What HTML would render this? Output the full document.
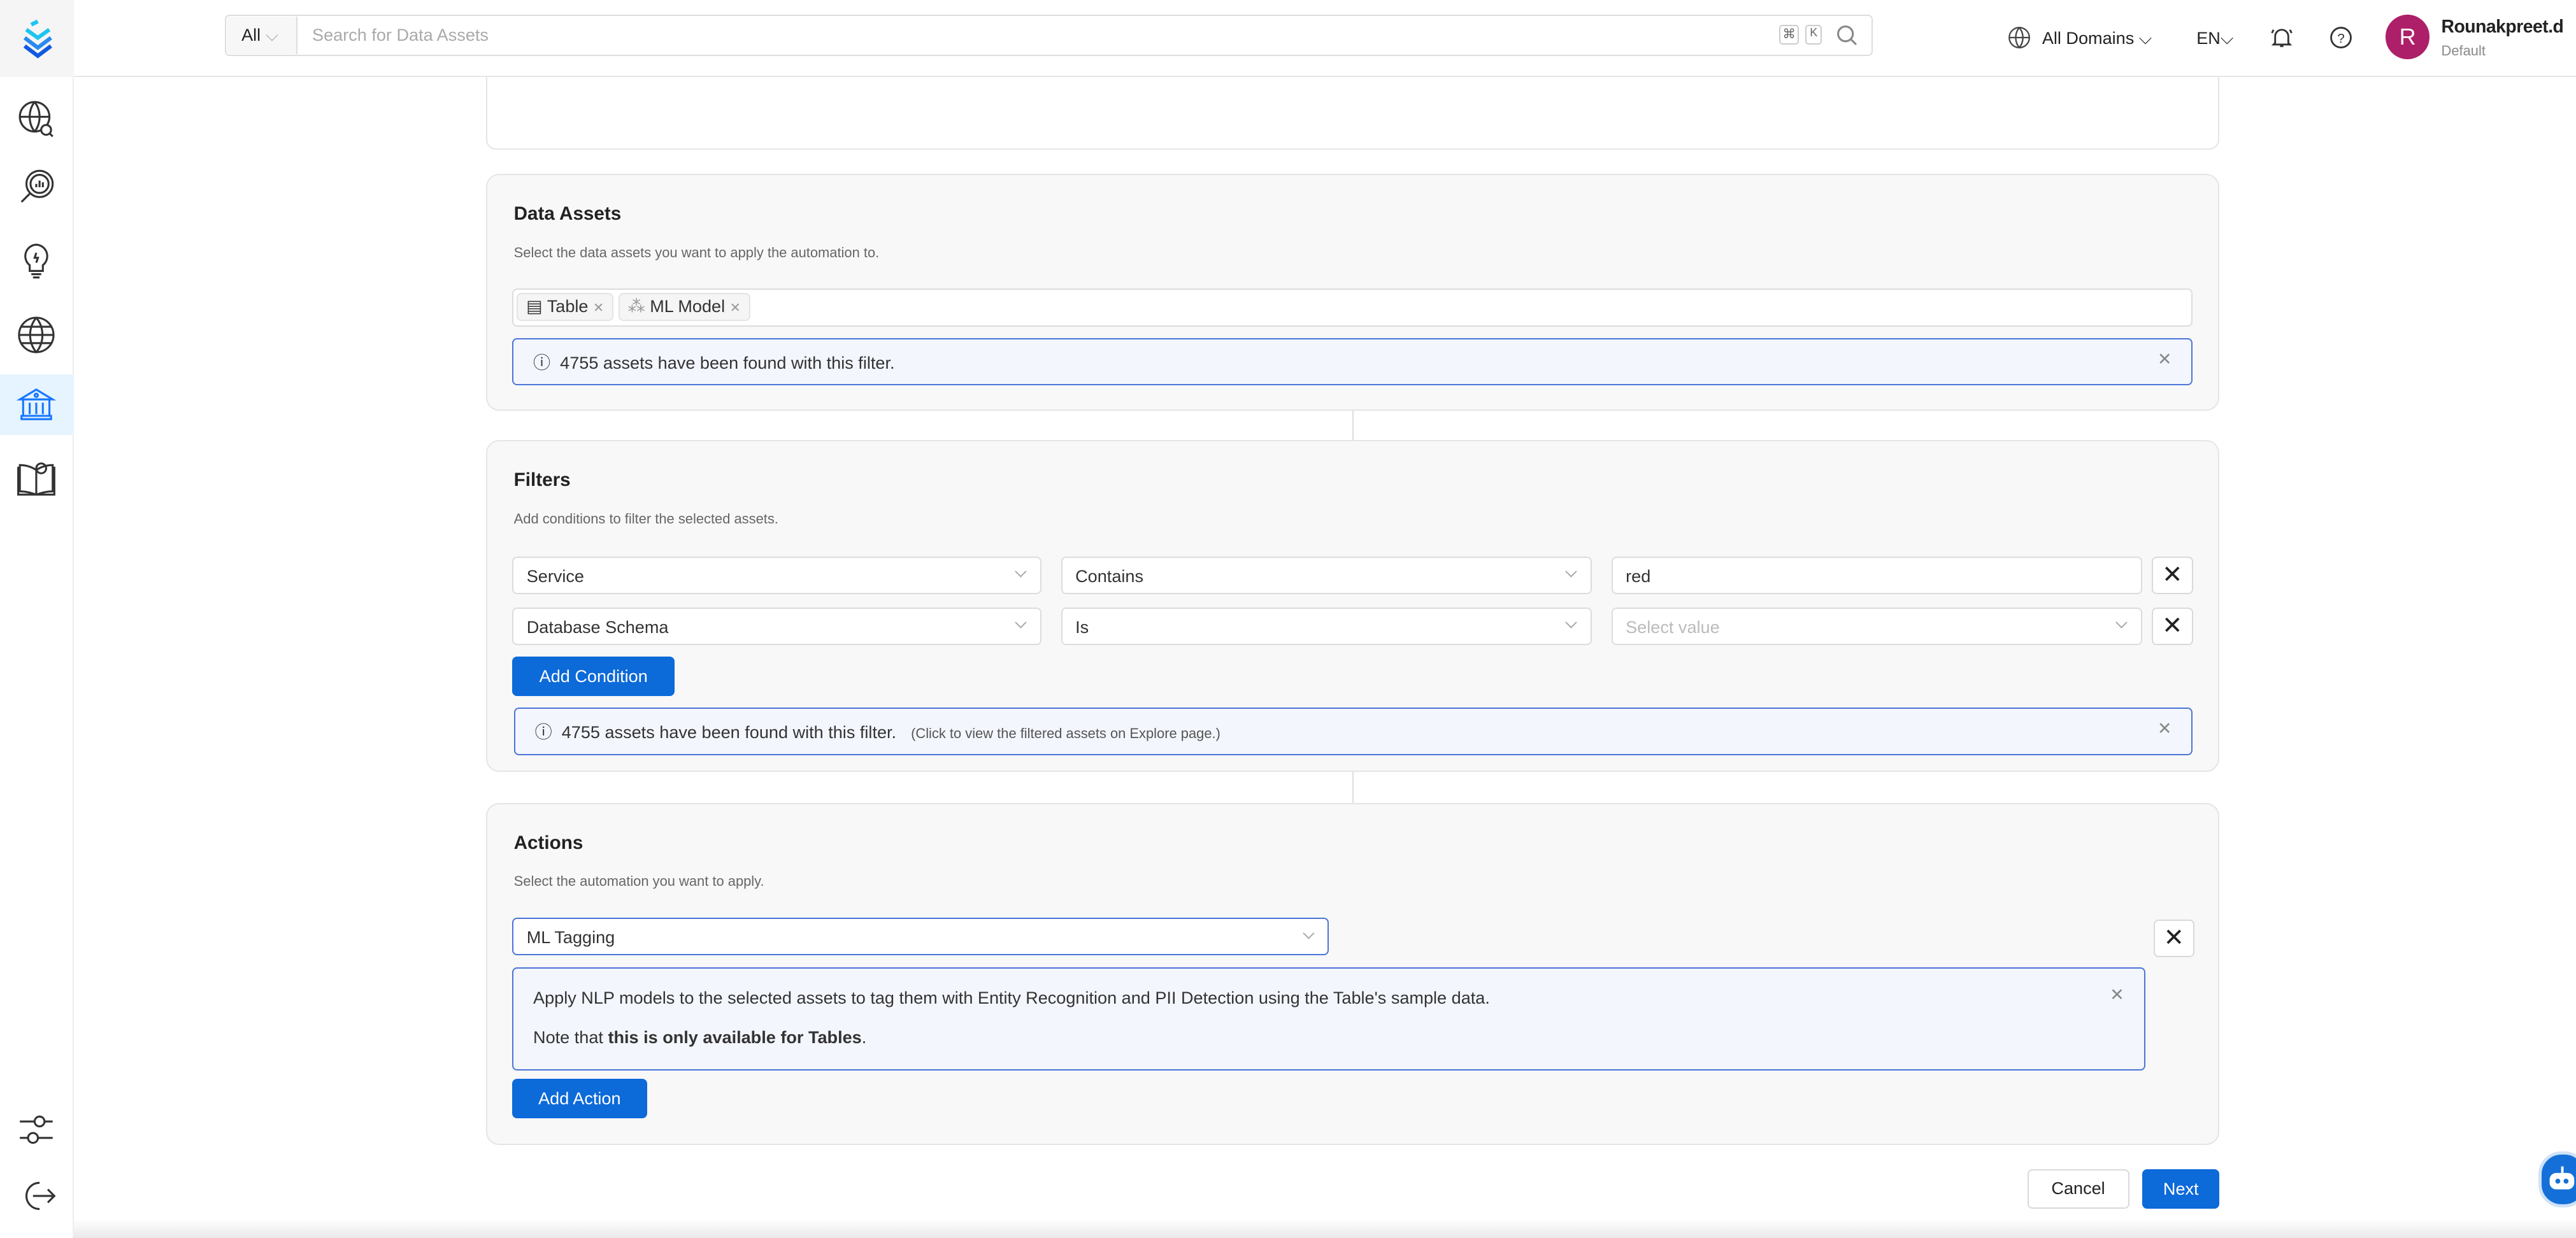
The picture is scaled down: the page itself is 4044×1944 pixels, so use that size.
<!DOCTYPE html>
<html><head><meta charset="utf-8"><style>
*{box-sizing:border-box;margin:0;padding:0}
html,body{width:4044px;height:1944px;overflow:hidden;background:#fff}
#r{zoom:2.5791;width:1568px;height:754px;position:relative;font-family:"Liberation Sans",sans-serif;color:#222;font-size:12px}
.a{position:absolute}
.side{left:0;top:0;width:45px;height:754px;background:#fff;border-right:1px solid #eee}
.hdr{left:45px;top:0;width:1523px;height:47px;border-bottom:1px solid #e6e6e6;background:#fff}
.card{position:absolute;left:296px;width:1055px;background:#f8f8f8;border:1px solid #e5e5e5;border-radius:8px}
.card h3{position:absolute;left:16px;font-size:11.5px;font-weight:600;color:#222}
.card p{position:absolute;left:16px;font-size:8.5px;color:#666}
.inp{position:absolute;background:#fff;border:1px solid #dcdcdc;border-radius:3px;height:23px;font-size:10.5px;padding:5px 8px;color:#333}
.chev{position:absolute;right:9px;top:6px;width:5px;height:5px;border-right:1px solid #aaa;border-bottom:1px solid #aaa;transform:rotate(45deg)}
.xb{position:absolute;width:25px;height:23px;background:#fff;border:1px solid #d9d9d9;border-radius:3px;font-size:15px;text-align:center;line-height:21px;color:#222}
.info{position:absolute;background:#f3f6fd;border:1px solid #4b74d8;border-radius:3px;font-size:10.5px;color:#333}
.btn{position:absolute;background:#0c6ad9;color:#fff;border-radius:3px;font-size:10.5px;text-align:center}
.ic{position:absolute;left:10px;width:24px;height:24px}
</style></head><body><div id="r">
<div class="a side">
<div class="a" style="left:0;top:0;width:45px;height:47px;background:#f5f5f5"></div>
<svg class="a" style="left:12px;top:12px" width="22" height="24" viewBox="0 0 22 24"><path d="M4 6l7 5 7-5" stroke="#1ec4f0" stroke-width="2.4" fill="none"/><path d="M3 11l8 6 8-6" stroke="#2a8bef" stroke-width="2.4" fill="none"/><path d="M3 16l8 6 8-6" stroke="#1058e0" stroke-width="2.4" fill="none"/><path d="M7 3l4-2" stroke="#1ec4f0" stroke-width="2.4"/></svg>
<svg class="ic" style="top:60px" viewBox="0 0 24 24" fill="none" stroke="#333" stroke-width="1.2"><circle cx="11" cy="11" r="9"/><path d="M2 11h18M11 2c-4 5-4 13 0 18M11 2c4 5 4 13 0 18"/><circle cx="18" cy="19" r="3" fill="#fff"/><path d="M20 21l2 2"/></svg>
<svg class="ic" style="top:102px" viewBox="0 0 24 24" fill="none" stroke="#333" stroke-width="1.2"><circle cx="14" cy="10" r="8"/><circle cx="14" cy="10" r="5.5"/><path d="M8 16l-5 5M12 12v-2M14 12V8M16 12v-3"/></svg>
<svg class="ic" style="top:147px" viewBox="0 0 24 24" fill="none" stroke="#333" stroke-width="1.2"><path d="M12 2a7 7 0 0 0-4 12.5V18h8v-3.5A7 7 0 0 0 12 2z"/><path d="M9 20h6M10 22h4M12 7l-1 3h2l-1 3"/></svg>
<svg class="ic" style="top:192px" viewBox="0 0 24 24" fill="none" stroke="#333" stroke-width="1.2"><circle cx="12" cy="12" r="10.5"/><path d="M1.5 12h21M12 1.5c-5 6-5 15 0 21M12 1.5c5 6 5 15 0 21M3 7h18M3 17h18"/></svg>
<div class="a" style="left:0;top:228px;width:45px;height:37px;background:#e6f4ff"></div>
<svg class="ic" style="top:234px" viewBox="0 0 24 24" fill="none" stroke="#1677ff" stroke-width="1.2"><path d="M2 9l10-6 10 6zM4 9v10M20 9v10M8 11v7M12 11v7M16 11v7M3 19h18v2H3z"/><circle cx="12" cy="6.5" r="1"/></svg>
<svg class="ic" style="top:279px" viewBox="0 0 24 24" fill="none" stroke="#333" stroke-width="1.2"><path d="M1 5v17h22V5M2 4c4 0 7 1 10 3 3-2 6-3 10-3v16c-4 0-7 1-10 2-3-1-6-2-10-2z M12 7v15"/><circle cx="15" cy="6" r="3"/></svg>
<svg class="ic" style="top:676px" viewBox="0 0 24 24" fill="none" stroke="#333" stroke-width="1.2"><path d="M2 7h9M17 7h5M2 17h5M13 17h9"/><circle cx="14" cy="7" r="3"/><circle cx="10" cy="17" r="3"/></svg>
<svg class="ic" style="top:716px" viewBox="0 0 24 24" fill="none" stroke="#333" stroke-width="1.2"><path d="M14 4A8 8 0 1 0 14 20M10 12h13M19 8l4 4-4 4"/></svg>
</div>
<div class="a hdr"></div>
<div class="a" style="left:137px;top:9px;width:1003px;height:25px;border:1px solid #ddd;border-radius:3px;background:#fff"></div>
<div class="a" style="left:138px;top:10px;width:43px;height:23px;background:#f7f7f7;border-right:1px solid #ddd;font-size:10.5px;padding:5px 9px">All <span style="color:#aaa">⌵</span></div>
<div class="a" style="left:190px;top:15px;font-size:10.5px;color:#aaa">Search for Data Assets</div>
<div class="a" style="left:1083px;top:15px;width:12px;height:12px;border:1px solid #ccc;border-radius:2px;font-size:8px;text-align:center;color:#666">⌘</div>
<div class="a" style="left:1099px;top:15px;width:10px;height:12px;border:1px solid #ccc;border-radius:2px;font-size:7px;text-align:center;color:#666">K</div>
<svg class="a" style="left:1118px;top:15px" width="13" height="13" viewBox="0 0 13 13" fill="none" stroke="#888" stroke-width="1.2"><circle cx="5.5" cy="5.5" r="4.5"/><path d="M9 9l3 3"/></svg>
<svg class="a" style="left:1222px;top:16px" width="14" height="14" viewBox="0 0 24 24" fill="none" stroke="#444" stroke-width="1.5"><circle cx="12" cy="12" r="10.5"/><path d="M1.5 12h21M12 1.5c-5 6-5 15 0 21M12 1.5c5 6 5 15 0 21"/></svg>
<div class="a" style="left:1243px;top:17px;font-size:10.5px">All Domains ⌵</div>
<div class="a" style="left:1337px;top:17px;font-size:10.5px">EN⌵</div>
<svg class="a" style="left:1382px;top:15px" width="14" height="15" viewBox="0 0 14 15" fill="none" stroke="#333" stroke-width="1.1"><path d="M3 11V7a4 4 0 0 1 8 0v4l1 1H2zM6 13h2M2 3l-1 2M12 3l1 2"/></svg>
<svg class="a" style="left:1418px;top:16px" width="14" height="14" viewBox="0 0 14 14" fill="none" stroke="#333" stroke-width="1.1"><circle cx="7" cy="7" r="6"/><text x="7" y="10" font-size="8" text-anchor="middle" fill="#333" stroke="none" font-family="Liberation Sans">?</text></svg>
<div class="a" style="left:1452px;top:9px;width:27px;height:27px;border-radius:50%;background:#ad1f69;color:#fff;font-size:14px;text-align:center;line-height:27px">R</div>
<div class="a" style="left:1486px;top:10px;font-size:11px;font-weight:600;letter-spacing:-0.2px">Rounakpreet.d</div>
<div class="a" style="left:1486px;top:26px;font-size:8.5px;color:#888">Default</div>

<div class="a" style="left:296px;top:47px;width:1055px;height:44px;background:#fff;border:1px solid #e5e5e5;border-top:none;border-radius:0 0 6px 6px"></div>

<div class="card" style="top:106px;height:144px">
<h3 style="top:17px">Data Assets</h3>
<p style="top:42px">Select the data assets you want to apply the automation to.</p>
<div class="inp" style="left:15px;top:69px;width:1023px;padding:2px">
 <span style="display:inline-block;background:#f5f5f5;border:1px solid #e4e4e4;border-radius:3px;height:17px;padding:1px 5px;font-size:10.5px">▤ Table <span style="color:#999;font-size:8px">✕</span></span>
 <span style="display:inline-block;background:#f5f5f5;border:1px solid #e4e4e4;border-radius:3px;height:17px;padding:1px 5px;font-size:10.5px"><span style="color:#999">⁂</span> ML Model <span style="color:#999;font-size:8px">✕</span></span>
</div>
<div class="info" style="left:15px;top:99px;width:1023px;height:29px;padding:6px 12px">ⓘ&nbsp; 4755 assets have been found with this filter.<span style="position:absolute;right:12px;color:#888">✕</span></div>
</div>
<div class="a" style="left:823px;top:250px;width:1px;height:18px;background:#ddd"></div>

<div class="card" style="top:268px;height:202px">
<h3 style="top:17px">Filters</h3>
<p style="top:42px">Add conditions to filter the selected assets.</p>
<div class="inp" style="left:15px;top:70px;width:322px">Service<i class="chev"></i></div>
<div class="inp" style="left:349px;top:70px;width:323px">Contains<i class="chev"></i></div>
<div class="inp" style="left:684px;top:70px;width:323px">red</div>
<div class="xb" style="left:1013px;top:70px">✕</div>
<div class="inp" style="left:15px;top:101px;width:322px">Database Schema<i class="chev"></i></div>
<div class="inp" style="left:349px;top:101px;width:323px">Is<i class="chev"></i></div>
<div class="inp" style="left:684px;top:101px;width:323px;color:#bbb">Select value<i class="chev"></i></div>
<div class="xb" style="left:1013px;top:101px">✕</div>
<div class="btn" style="left:15px;top:131px;width:99px;height:24px;line-height:24px">Add Condition</div>
<div class="info" style="left:16px;top:162px;width:1022px;height:29px;padding:6px 12px">ⓘ&nbsp; 4755 assets have been found with this filter. <span style="font-size:8.5px;color:#555;margin-left:6px">(Click to view the filtered assets on Explore page.)</span><span style="position:absolute;right:12px;color:#888">✕</span></div>
</div>
<div class="a" style="left:823px;top:470px;width:1px;height:19px;background:#ddd"></div>

<div class="card" style="top:489px;height:208px">
<h3 style="top:17px">Actions</h3>
<p style="top:42px">Select the automation you want to apply.</p>
<div class="inp" style="left:15px;top:69px;width:497px;border-color:#4b74d8">ML Tagging<i class="chev"></i></div>
<div class="xb" style="left:1014px;top:70px">✕</div>
<div class="info" style="left:15px;top:99px;width:994px;height:63px;padding:6px 12px;line-height:24px">Apply NLP models to the selected assets to tag them with Entity Recognition and PII Detection using the Table's sample data.<br>Note that <b>this is only available for Tables</b>.<span style="position:absolute;right:12px;top:4px;color:#888">✕</span></div>
<div class="btn" style="left:15px;top:167px;width:82px;height:24px;line-height:24px">Add Action</div>
</div>

<div class="a" style="left:1234px;top:712px;width:62px;height:24px;border:1px solid #d9d9d9;border-radius:3px;background:#fff;font-size:10.5px;text-align:center;line-height:22px">Cancel</div>
<div class="btn" style="left:1304px;top:712px;width:47px;height:24px;line-height:24px">Next</div>
<div class="a" style="left:1545px;top:701px;width:30px;height:34px;border-radius:14px;background:#1470d8;border:2px solid #cfe2f7"></div>
<svg class="a" style="left:1551px;top:709px" width="17" height="17" viewBox="0 0 17 17" fill="#fff"><rect x="1" y="5" width="15" height="10" rx="4"/><circle cx="6" cy="10" r="1.5" fill="#1470d8"/><circle cx="11" cy="10" r="1.5" fill="#1470d8"/><rect x="8" y="1" width="1.5" height="4"/></svg>
<div class="a" style="left:45px;top:742px;width:1523px;height:12px;background:linear-gradient(#fff,#e8e8e8)"></div>
</div></body></html>
